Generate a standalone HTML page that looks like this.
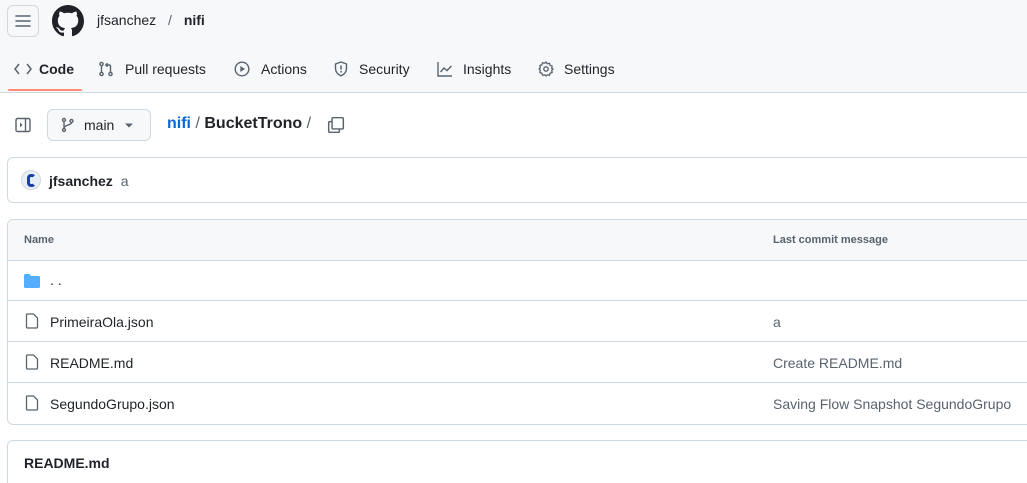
<!DOCTYPE html>
<html style="overflow:hidden;height:483px"><head><meta charset="utf-8"><style>
*{box-sizing:border-box;margin:0;padding:0}
body{width:1027px;height:483px;overflow:hidden;background:#fff;font-family:"Liberation Sans",sans-serif;color:#1f2328;position:relative}
.abs{position:absolute}
.hdr{position:absolute;left:0;top:0;width:1027px;height:93px;background:#f6f8fa;border-bottom:1px solid #d1d9e0}
svg{display:block}
.nav{font-size:14px;color:#1f2328;top:61px}
.box{position:absolute;left:7px;width:1030px;border:1px solid #d1d9e0;border-radius:6px}
.row{position:absolute;left:0;width:100%;height:41px;border-top:1px solid #d1d9e0;font-size:14px}
.row span{position:absolute;top:13px}
.msg{left:765px;color:#59636e}
</style></head><body>
<div class="hdr"></div>
<div class="abs" style="left:7px;top:5px;width:32px;height:32px;border:1px solid #d1d9e0;border-radius:6px;background:#f6f8fa">
<svg width="30" height="30" viewBox="0 0 30 30"><path d="M8 10h14M8 15h14M8 20h14" stroke="#59636e" stroke-width="1.6" stroke-linecap="round"/></svg></div>
<svg class="abs" style="left:52px;top:5px" width="32" height="32" viewBox="0 0 16 16"><path fill="#1f2328" d="M8 0C3.58 0 0 3.58 0 8c0 3.54 2.29 6.530 5.47 7.59.4.07.55-.17.55-.38 0-.19-.01-.82-.01-1.49-2.01.37-2.530-.49-2.69-.94-.09-.23-.48-.94-.82-1.13-.28-.15-.68-.52-.01-.53.63-.01 1.08.58 1.23.82.72 1.21 1.87.87 2.33.66.07-.52.28-.87.51-1.07-1.78-.2-3.64-.89-3.64-3.95 0-.87.31-1.59.82-2.150-.08-.2-.36-1.02.08-2.12 0 0 .67-.21 2.2.82.64-.18 1.32-.27 2-.27.68 0 1.36.09 2 .27 1.53-1.04 2.2-.82 2.2-.82.44 1.1.16 1.92.08 2.12.51.56.82 1.27.82 2.15 0 3.07-1.87 3.75-3.65 3.95.29.25.54.73.54 1.48 0 1.07-.01 1.93-.01 2.2 0 .21.15.46.55.38A8.013 8.013 0 0016 8c0-4.42-3.58-8-8-8z"/></svg>
<div class="abs" style="left:97px;top:12px;font-size:14px">jfsanchez <span style="color:#59636e;margin:0 8px">/</span> <b>nifi</b></div>

<svg class="abs" style="left:14px;top:61px" width="18" height="16" viewBox="0 0 18 16"><path d="M5 3L1 8l4 5M13 3l4 5-4 5" fill="none" stroke="#59636e" stroke-width="1.5"/></svg>
<div class="abs nav" style="left:39px;font-weight:bold">Code</div>
<div class="abs" style="left:8px;top:89px;width:74px;height:2px;background:#fd8c73;border-radius:2px"></div>
<svg class="abs" style="left:98px;top:61px" width="16" height="16" viewBox="0 0 16 16"><g fill="none" stroke="#59636e" stroke-width="1.4"><circle cx="3.5" cy="3" r="1.6"/><circle cx="3.5" cy="13" r="1.6"/><circle cx="12.5" cy="13" r="1.6"/><path d="M3.5 4.6v6.8M12.5 11.4V5.5c0-1-.6-1.5-1.5-1.5H8M9.5 2.2L7.8 4l1.7 1.8"/></g></svg>
<div class="abs nav" style="left:125px">Pull requests</div>
<svg class="abs" style="left:234px;top:61px" width="16" height="16" viewBox="0 0 16 16"><circle cx="8" cy="8" r="6.8" fill="none" stroke="#59636e" stroke-width="1.4"/><path d="M6.3 5v6l4.7-3z" fill="#59636e"/></svg>
<div class="abs nav" style="left:261px">Actions</div>
<svg class="abs" style="left:333px;top:61px" width="16" height="16" viewBox="0 0 16 16"><path d="M8 1L2.5 3v4.5c0 3.5 2.5 6 5.5 7.3 3-1.3 5.5-3.8 5.5-7.3V3z" fill="none" stroke="#59636e" stroke-width="1.4"/><path d="M8 4.5v4.2" stroke="#59636e" stroke-width="1.5"/><circle cx="8" cy="10.8" r=".9" fill="#59636e"/></svg>
<div class="abs nav" style="left:359px">Security</div>
<svg class="abs" style="left:437px;top:61px" width="16" height="16" viewBox="0 0 16 16"><path d="M1 1v14h14M3.5 11l3.5-4 3 2.5L14.5 5" fill="none" stroke="#59636e" stroke-width="1.4"/></svg>
<div class="abs nav" style="left:463px">Insights</div>
<svg class="abs" style="left:538px;top:61px" width="16" height="16" viewBox="0 0 16 16"><circle cx="8" cy="8" r="2.2" fill="none" stroke="#59636e" stroke-width="1.4"/><path d="M8 1l1.3 1.8 2.2-.5.6 2.1 2.1.7-.5 2.2L15 8l-1.3 1.3.5 2.2-2.1.7-.6 2.1-2.2-.5L8 15l-1.3-1.2-2.2.5-.6-2.1-2.1-.7.5-2.2L1 8l1.3-1.3-.5-2.2 2.1-.7.6-2.1 2.2.5z" fill="none" stroke="#59636e" stroke-width="1.3" stroke-linejoin="round"/></svg>
<div class="abs nav" style="left:564px">Settings</div>

<svg class="abs" style="left:15px;top:117px" width="16" height="16" viewBox="0 0 16 16"><rect x="1" y="1.5" width="14" height="13" rx="1.5" fill="none" stroke="#59636e" stroke-width="1.4"/><path d="M10.5 2v12" stroke="#59636e" stroke-width="1.4"/><path d="M5 5.5l2.5 2.5L5 10.5z" fill="#59636e"/></svg>
<div class="abs" style="left:47px;top:109px;width:104px;height:32px;border:1px solid #d1d9e0;border-radius:6px;background:#f6f8fa"></div>
<svg class="abs" style="left:60px;top:117px" width="16" height="16" viewBox="0 0 16 16"><g fill="none" stroke="#59636e" stroke-width="1.4"><circle cx="4" cy="3" r="1.5"/><circle cx="4" cy="13" r="1.5"/><circle cx="11.5" cy="4" r="1.5"/><path d="M4 4.5v7M11.5 5.5c0 3-7.5 2-7.5 6"/></g></svg>
<div class="abs" style="left:84px;top:117px;font-size:14px">main</div>
<svg class="abs" style="left:124px;top:121px" width="10" height="8" viewBox="0 0 10 8"><path d="M1 2.5h8L5 6.5z" fill="#59636e"/></svg>
<div class="abs" style="left:167px;top:115px;font-size:16px"><span style="color:#0969da;font-weight:bold">nifi</span> <span style="color:#59636e">/</span> <b>BucketTrono</b> <span style="color:#59636e">/</span></div>
<svg class="abs" style="left:327px;top:116px" width="18" height="18" viewBox="0 0 16 16"><path d="M5.5 1.5h8a1 1 0 011 1v8a1 1 0 01-1 1h-8a1 1 0 01-1-1v-8a1 1 0 011-1z" fill="none" stroke="#59636e" stroke-width="1.3"/><path d="M4.5 5H2.5a1 1 0 00-1 1v7.5a1 1 0 001 1H10a1 1 0 001-1v-2" fill="none" stroke="#59636e" stroke-width="1.3"/></svg>

<div class="box" style="top:157px;height:46px"></div>
<div class="abs" style="left:21px;top:170px;width:20px;height:20px;border-radius:50%;background:#e8eef6;border:1px solid #d1d9e0;overflow:hidden"><div style="position:absolute;left:5px;top:3px;width:9px;height:13px;border:3px solid #1a3ea8;border-radius:4px;border-right-color:transparent"></div></div>
<div class="abs" style="left:49px;top:173px;font-size:14px"><b>jfsanchez</b> <span style="color:#59636e;margin-left:4px">a</span></div>

<div class="box" style="top:219px;height:206px;overflow:hidden">
<div style="position:absolute;left:0;top:0;width:100%;height:40px;background:#f6f8fa"></div>
<div style="position:absolute;left:16px;top:14px;font-size:11px;font-weight:bold;color:#59636e">Name</div>
<div style="position:absolute;left:765px;top:14px;font-size:11px;font-weight:bold;color:#59636e">Last commit message</div>
<div class="row" style="top:40px"><svg style="position:absolute;left:16px;top:13px" width="16" height="14" viewBox="0 0 16 14"><path d="M0 1.5A1.5 1.5 0 011.5 0h4l1.5 2h7.5A1.5 1.5 0 0116 3.5v9a1.5 1.5 0 01-1.5 1.5h-13A1.5 1.5 0 010 12.5z" fill="#54aeff"/></svg><span style="left:42px;top:11px">. .</span></div>
<div class="row" style="top:80px"><svg style="position:absolute;left:16px;top:12px" width="16" height="16" viewBox="0 0 16 16"><path d="M3.5 1h6l4 4v9a1 1 0 01-1 1h-9a1 1 0 01-1-1V2a1 1 0 011-1z" fill="none" stroke="#59636e" stroke-width="1.3"/></svg><span style="left:42px">PrimeiraOla.json</span><span class="msg">a</span></div>
<div class="row" style="top:121px"><svg style="position:absolute;left:16px;top:12px" width="16" height="16" viewBox="0 0 16 16"><path d="M3.5 1h6l4 4v9a1 1 0 01-1 1h-9a1 1 0 01-1-1V2a1 1 0 011-1z" fill="none" stroke="#59636e" stroke-width="1.3"/></svg><span style="left:42px">README.md</span><span class="msg">Create README.md</span></div>
<div class="row" style="top:162px"><svg style="position:absolute;left:16px;top:12px" width="16" height="16" viewBox="0 0 16 16"><path d="M3.5 1h6l4 4v9a1 1 0 01-1 1h-9a1 1 0 01-1-1V2a1 1 0 011-1z" fill="none" stroke="#59636e" stroke-width="1.3"/></svg><span style="left:42px">SegundoGrupo.json</span><span class="msg">Saving Flow Snapshot SegundoGrupo</span></div>
</div>

<div class="box" style="top:440px;height:44px;border-bottom:none;border-radius:6px 6px 0 0"></div>
<div class="abs" style="left:24px;top:455px;font-size:14px;font-weight:bold">README.md</div>
</body></html>
